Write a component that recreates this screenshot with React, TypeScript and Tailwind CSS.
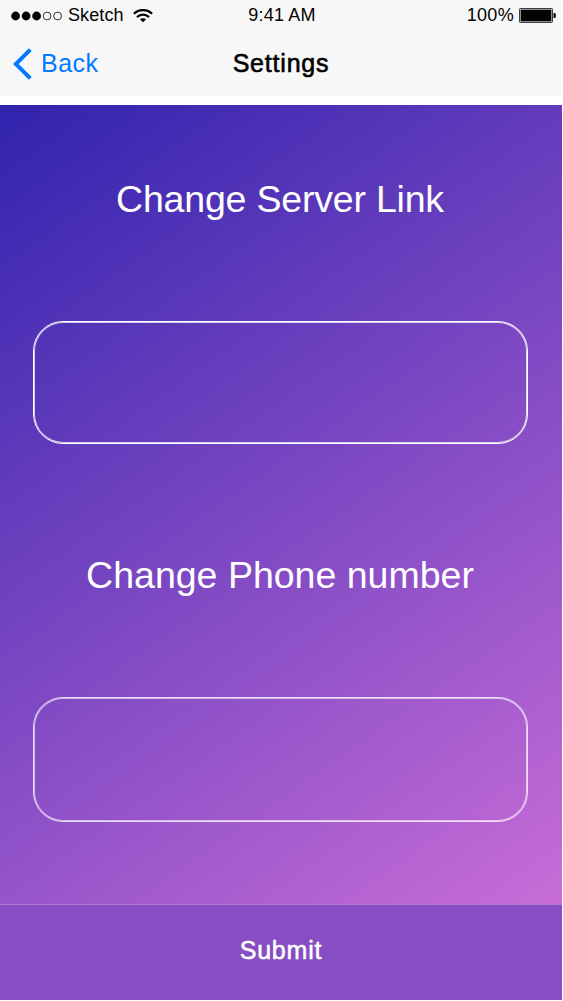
function SignalDots() {
  return (
    <svg className="h-[10px] w-[52px] shrink-0" viewBox="0 0 52 10">
      {[4.6, 15.1, 25.6].map((x) => (
        <circle key={x} cx={x} cy="5" r="4.4" fill="#030303" />
      ))}
      {[36.1, 46.6].map((x) => (
        <circle key={x} cx={x} cy="5" r="3.9" fill="none" stroke="#030303" strokeWidth="0.8" />
      ))}
    </svg>
  );
}

function WifiIcon() {
  return (
    <svg className="block h-[14px] w-5 shrink-0" viewBox="0 0 20 14">
      <g fill="none" stroke="#030303" strokeWidth="2.2">
        <path d="M0.9 4.8A13 13 0 0 1 19.1 4.8" />
        <path d="M4 8.1A8.7 8.7 0 0 1 16 8.1" />
      </g>
      <path d="M6.9 10.3A5.3 5.3 0 0 1 13.1 10.3L10 13.2Z" fill="#030303" />
    </svg>
  );
}

function BatteryIcon() {
  return (
    <svg className="h-[15px] w-[37px] shrink-0" viewBox="0 0 37 15">
      <rect x="0.5" y="0.5" width="33" height="14" rx="0.8" fill="#b4b4b4" stroke="#3c3c3c" strokeWidth="1" />
      <rect x="1.8" y="1.8" width="30.4" height="11.4" fill="#030303" />
      <path d="M34.5 5H35.5Q36.8 5 36.8 6.5V8.5Q36.8 10 35.5 10H34.5Z" fill="#030303" />
    </svg>
  );
}

function Header() {
  return (
    <header className="h-24 bg-[#f7f7f7]">
      <div className="grid h-[31px] grid-cols-3 items-center pl-[11px] pr-[6px] text-[18px] leading-[31px] text-[#030303]">
        <div className="flex items-center">
          <SignalDots />
          <span className="ml-[5px] w-[57px] whitespace-nowrap tracking-[0.1px]">Sketch</span>
          <span className="ml-2"><WifiIcon /></span>
        </div>
        <span className="pr-[3px] text-center tracking-[0.2px]">9:41 AM</span>
        <div className="flex items-center justify-end">
          <span className="mr-[5px] tracking-[0.3px]">100%</span>
          <BatteryIcon />
        </div>
      </div>
      <div className="grid h-[65px] grid-cols-3 px-[13px] text-[25px] leading-[65px]">
        <button className="flex items-center text-[#007aff]">
          <svg className="h-8 w-[19px]" viewBox="0 0 19 32">
            <path d="M17.3 1.6L2.8 16L17.3 30.4" fill="none" stroke="currentColor" strokeWidth="4" />
          </svg>
          <span className="mb-px ml-[9px] tracking-[0.5px]">Back</span>
        </button>
        <h1 className="text-center tracking-[0.8px] text-black [-webkit-text-stroke:0.6px_currentColor]">Settings</h1>
      </div>
    </header>
  );
}

export default function App() {
  return (
    <div className="h-[1001px] w-[563px] overflow-hidden bg-white font-['Liberation_Sans',sans-serif]">
      <div className="flex h-[1000px] w-[562px] flex-col">
        <Header />
        <main className="mt-[9px] flex h-[799px] flex-col items-center bg-[linear-gradient(144.9deg,#3023ae,#c86dd7)] pr-[2px] text-[37.5px] leading-[44px] text-white">
          <h2 className="mt-[72px] h-[44px] whitespace-nowrap tracking-[-0.2px]">Change Server Link</h2>
          <input aria-label="Server link" className="mt-[100px] h-[123px] w-[495px] rounded-[30px] border border-white bg-transparent px-6 shadow-[inset_0_0_0_1px_rgba(255,255,255,0.75)] outline-none" />
          <h2 className="mt-[109px] h-[44px] whitespace-nowrap">Change Phone number</h2>
          <input aria-label="Phone number" className="mt-[100px] h-[125px] w-[495px] rounded-[30px] border border-white/80 bg-transparent px-6 shadow-[inset_0_0_0_1px_rgba(255,255,255,0.6)] outline-none" />
        </main>
        <button className="h-24 border-t border-[#b078d3] bg-[#874ec4] pb-1 text-[25px] leading-[91px] tracking-[0.8px] text-white [-webkit-text-stroke:0.5px_currentColor]">Submit</button>
      </div>
    </div>
  );
}
